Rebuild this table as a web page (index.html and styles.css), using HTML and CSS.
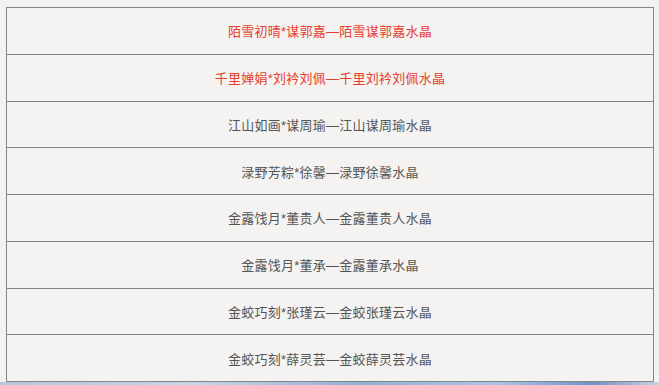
FILE: index.html
```html
<!DOCTYPE html>
<html>
<head lang="zh">
    <meta charset="UTF-8">
    <title>水晶</title>
    <link rel="stylesheet" href="styles.css">
</head>
<body>
<div class="wrap">
    <table class="crystal_list">
        <tr class="hot"><td>陌雪初晴*谋郭嘉—陌雪谋郭嘉水晶</td></tr>
        <tr class="hot"><td>千里婵娟*刘衿刘佩—千里刘衿刘佩水晶</td></tr>
        <tr><td>江山如画*谋周瑜—江山谋周瑜水晶</td></tr>
        <tr><td>渌野芳粽*徐馨—渌野徐馨水晶</td></tr>
        <tr><td>金露饯月*董贵人—金露董贵人水晶</td></tr>
        <tr><td>金露饯月*董承—金露董承水晶</td></tr>
        <tr><td>金蛟巧刻*张瑾云—金蛟张瑾云水晶</td></tr>
        <tr><td>金蛟巧刻*薛灵芸—金蛟薛灵芸水晶</td></tr>
    </table>
</div>
<div class="desk"></div>
</body>
</html>
```

FILE: styles.css
```css
* {
    margin: 0;
    padding: 0;
}
html, body {
    height: 100%;
}
body {
    background-color: #f3f2f0;
    font-family: "Liberation Sans", "Noto Sans CJK SC", sans-serif;
    font-size: 13px;
    color: #555555;
    display: flex;
    flex-direction: column;
}
.wrap {
    flex: 1;
    padding: 7px 5px 0 6px;
}
.crystal_list {
    width: 648px;
    border-collapse: collapse;
    background-color: #f4f3f1;
}
.crystal_list tr {
    height: 46.75px;
}
.crystal_list td {
    border: 1px solid #858585;
    text-align: center;
    vertical-align: middle;
    letter-spacing: 0.25px;
}
.hot td {
    color: #e5402f;
}

/* strip of desktop wallpaper under the window */
.desk {
    height: 3px;
    background: linear-gradient(90deg, #b7c6d8 0%, #c6d4e4 30%, #8fb0d8 55%, #a9c6ea 75%, #6f92c8 90%, #c9d3df 100%);
}
```
